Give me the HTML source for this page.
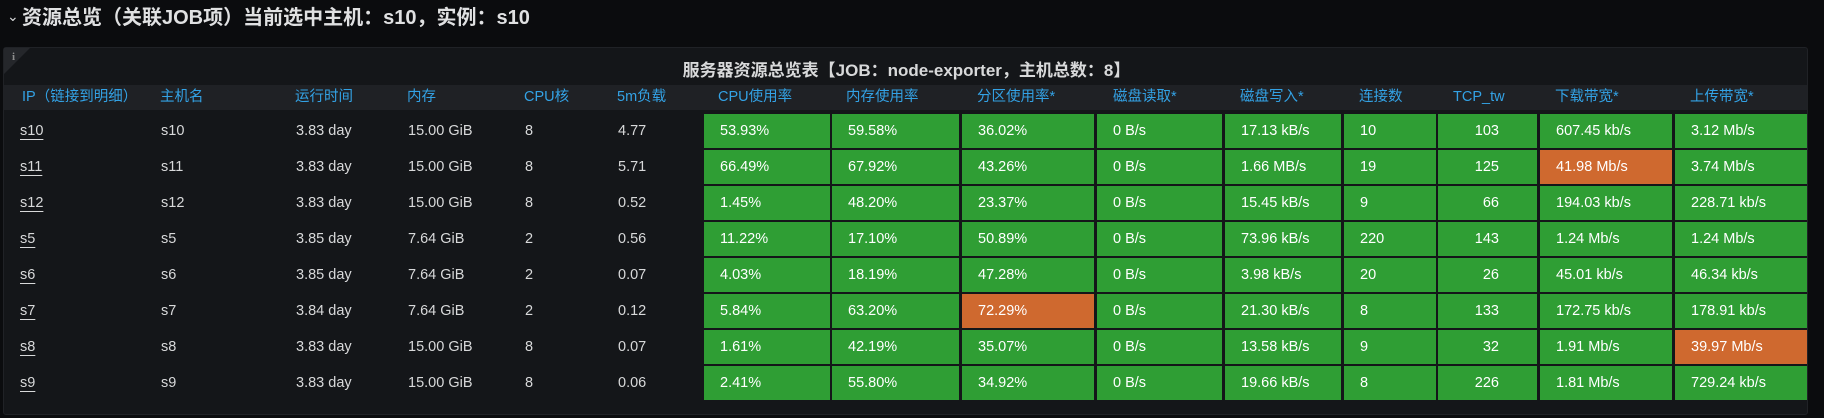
<!DOCTYPE html>
<html><head><meta charset="utf-8"><style>
*{margin:0;padding:0;box-sizing:border-box}
body{width:1824px;height:418px;background:#0b0c0e;font-family:"Liberation Sans","Noto Sans CJK SC",sans-serif;color:#d8d9da;position:relative;overflow:hidden}
.t{position:absolute;white-space:nowrap}
#title{left:22px;top:5px;font-size:20px;font-weight:bold;color:#e0e1e2;line-height:26px}
#chev{left:7px;top:8px;font-size:14px;color:#d8d9da}
#panel{position:absolute;left:3px;top:47px;width:1805px;height:368px;background:#141619;border:1px solid #202226;border-radius:3px}
#corner{position:absolute;left:0;top:0;width:0;height:0;border-top:26px solid #25272b;border-right:26px solid transparent}
#ci{position:absolute;left:8px;top:3px;font-size:11px;color:#8e8e8e;font-family:"Liberation Serif",serif;font-weight:bold}
#ptitle{position:absolute;left:0;width:1805px;top:8px;text-align:center;font-size:17px;font-weight:bold;color:#d8d9da}
#hdr{position:absolute;left:0;top:37px;width:1803px;height:25px;background:#1f2125}
.h{position:absolute;top:86px;font-size:14.5px;color:#33a2e5;line-height:22px}
.c{position:absolute;height:34px;line-height:34px;font-size:14.5px;color:#fff;padding-left:16px}
.g{background:#2f9e34}.o{background:#cf692f}
.v{position:absolute;font-size:14.5px;line-height:34px;color:#d8d9da}
.u{text-decoration:underline;text-underline-offset:4px}
</style></head><body>
<div id="chev" class="t">⌄</div>
<div id="title" class="t">资源总览（关联JOB项）当前选中主机：s10，实例：s10</div>
<div id="panel"><div id="corner"></div><div id="ci">i</div>
<div id="ptitle">服务器资源总览表【JOB：node-exporter，主机总数：8】</div>
<div id="hdr"></div></div>
<div class="h t" style="left:22px">IP（链接到明细）</div>
<div class="h t" style="left:160px">主机名</div>
<div class="h t" style="left:295px">运行时间</div>
<div class="h t" style="left:407px">内存</div>
<div class="h t" style="left:524px">CPU核</div>
<div class="h t" style="left:617px">5m负载</div>
<div class="h t" style="left:718px">CPU使用率</div>
<div class="h t" style="left:846px">内存使用率</div>
<div class="h t" style="left:977px">分区使用率*</div>
<div class="h t" style="left:1113px">磁盘读取*</div>
<div class="h t" style="left:1240px">磁盘写入*</div>
<div class="h t" style="left:1359px">连接数</div>
<div class="h t" style="left:1453px">TCP_tw</div>
<div class="h t" style="left:1555px">下载带宽*</div>
<div class="h t" style="left:1690px">上传带宽*</div>
<div id="rows"></div>
<script>
var d=[
["s10","s10","3.83 day","15.00 GiB","8","4.77","53.93%","59.58%","36.02%","0 B/s","17.13 kB/s","10","103","607.45 kb/s","3.12 Mb/s"],
["s11","s11","3.83 day","15.00 GiB","8","5.71","66.49%","67.92%","43.26%","0 B/s","1.66 MB/s","19","125","41.98 Mb/s","3.74 Mb/s"],
["s12","s12","3.83 day","15.00 GiB","8","0.52","1.45%","48.20%","23.37%","0 B/s","15.45 kB/s","9","66","194.03 kb/s","228.71 kb/s"],
["s5","s5","3.85 day","7.64 GiB","2","0.56","11.22%","17.10%","50.89%","0 B/s","73.96 kB/s","220","143","1.24 Mb/s","1.24 Mb/s"],
["s6","s6","3.85 day","7.64 GiB","2","0.07","4.03%","18.19%","47.28%","0 B/s","3.98 kB/s","20","26","45.01 kb/s","46.34 kb/s"],
["s7","s7","3.84 day","7.64 GiB","2","0.12","5.84%","63.20%","72.29%","0 B/s","21.30 kB/s","8","133","172.75 kb/s","178.91 kb/s"],
["s8","s8","3.83 day","15.00 GiB","8","0.07","1.61%","42.19%","35.07%","0 B/s","13.58 kB/s","9","32","1.91 Mb/s","39.97 Mb/s"],
["s9","s9","3.83 day","15.00 GiB","8","0.06","2.41%","55.80%","34.92%","0 B/s","19.66 kB/s","8","226","1.81 Mb/s","729.24 kb/s"]];
var tx=[20,161,296,408,525,618];
var cx=[[704,830],[832,959],[962,1094],[1097,1222],[1225,1341],[1344,1436],[1438,1537],[1540,1672],[1675,1807]];
var orange={"1_13":1,"5_8":1,"6_14":1};
var h="";
d.forEach(function(r,i){var y=114+36*i;
for(var j=0;j<6;j++)h+='<div class="v t'+(j==0?' u':'')+'" style="left:'+tx[j]+'px;top:'+y+'px">'+r[j]+'</div>';
for(var k=0;k<9;k++){var j=k+6,c=cx[k];var cl=orange[i+"_"+j]?"o":"g";
var st='left:'+c[0]+'px;top:'+y+'px;width:'+(c[1]-c[0])+'px;';
if(j==12)st+='text-align:right;padding-right:38px;padding-left:0;';
h+='<div class="c t '+cl+'" style="'+st+'">'+r[j]+'</div>';}
});
document.getElementById("rows").innerHTML=h;
</script>
</body></html>
